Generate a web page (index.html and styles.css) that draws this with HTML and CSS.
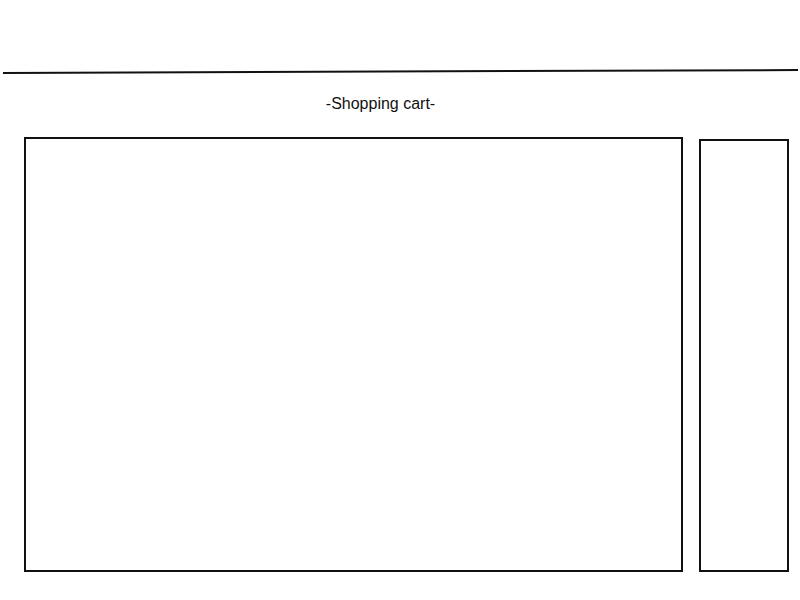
FILE: index.html
```html
<!DOCTYPE html>
<html>
<head>
<meta charset="utf-8">
<link rel="stylesheet" href="styles.css">
</head>
<body>
<header class="topbar">
  <svg class="rule" width="800" height="92" viewBox="0 0 800 92">
    <line x1="3" y1="73" x2="798" y2="70" stroke="#111" stroke-width="2"/>
  </svg>
</header>
<h1 class="title">-Shopping cart-</h1>
<main class="content">
  <section class="cart"></section>
  <aside class="summary"></aside>
</main>
</body>
</html>
```
FILE: styles.css
```css
html, body {
  margin: 0;
  padding: 0;
  background: #fff;
}
body {
  width: 800px;
  height: 600px;
  overflow: hidden;
  font-family: "Liberation Sans", Arial, sans-serif;
  color: #111;
}
.topbar {
  height: 92px;
}
.rule {
  display: block;
}
.title {
  margin: 0;
  padding-top: 3px;
  font-size: 16px;
  font-weight: normal;
  line-height: 18px;
  height: 18px;
  text-align: center;
  padding-right: 39px;
}
.content {
  display: flex;
  align-items: flex-start;
  padding-left: 24px;
  margin-top: 24px;
  gap: 16px;
}
.cart {
  box-sizing: border-box;
  width: 659px;
  height: 435px;
  border: 2px solid #111;
}
.summary {
  box-sizing: border-box;
  width: 90px;
  height: 433px;
  margin-top: 2px;
  border: 2px solid #111;
}
```
